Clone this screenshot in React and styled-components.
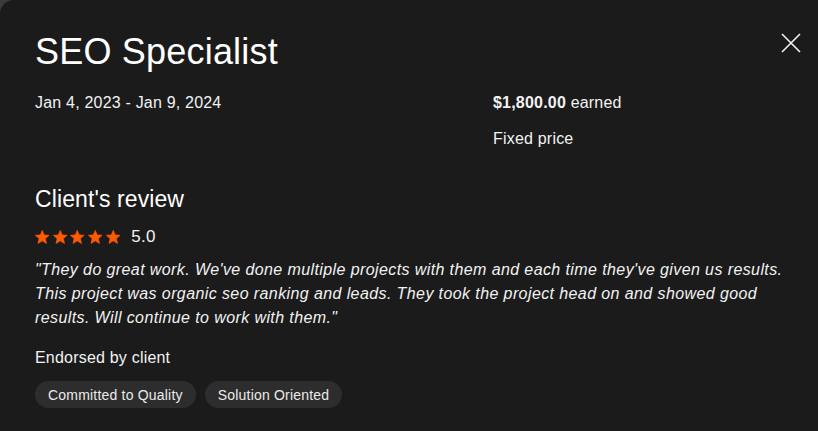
import styled, { createGlobalStyle } from 'styled-components';

const Global = createGlobalStyle`
  html, body {
    margin: 0;
    padding: 0;
    background: #3a3a3a;
  }
  body {
    font-family: "Liberation Sans", Arial, sans-serif;
    color: #f2f2f2;
  }
`;

const Modal = styled.div`
  position: relative;
  box-sizing: border-box;
  width: 818px;
  height: 431px;
  background: #1b1b1b;
  border-top-left-radius: 14px;
  padding: 30px 35px 0 35px;
`;

const Close = styled.button`
  position: absolute;
  top: 33px;
  right: 17px;
  width: 20px;
  height: 20px;
  padding: 0;
  border: 0;
  background: none;
  cursor: pointer;
  svg {
    display: block;
  }
`;

const Title = styled.h1`
  margin: 0;
  font-size: 36px;
  font-weight: 400;
  line-height: 44px;
  letter-spacing: 0.2px;
  color: #fff;
`;

const Meta = styled.div`
  display: grid;
  grid-template-columns: 458px 1fr;
  margin-top: 19px;
  font-size: 16px;
  line-height: 20px;
  letter-spacing: 0.2px;
  ._right {
    display: flex;
    flex-direction: column;
    gap: 16px;
  }
  b {
    font-weight: 700;
  }
`;

const SectionTitle = styled.h2`
  margin: 36px 0 0;
  font-size: 23px;
  font-weight: 400;
  line-height: 28px;
  letter-spacing: 0.1px;
  color: #fff;
`;

const Rating = styled.div`
  display: flex;
  align-items: center;
  height: 20px;
  margin-top: 14px;
  ._stars {
    display: flex;
    gap: 1.2px;
    margin-left: -1px;
    margin-right: 10px;
  }
  ._score {
    font-size: 17px;
    line-height: 20px;
    letter-spacing: 0.3px;
  }
`;

const Quote = styled.p`
  margin: 11px 0 0;
  font-size: 16px;
  font-style: italic;
  line-height: 24px;
  letter-spacing: 0.4px;
  color: #f2f2f2;
`;

const Label = styled.div`
  margin-top: 18px;
  font-size: 16px;
  line-height: 20px;
  letter-spacing: 0.2px;
`;

const Chips = styled.div`
  display: flex;
  gap: 9px;
  margin-top: 13px;
`;

const Chip = styled.span`
  display: inline-flex;
  align-items: center;
  height: 27px;
  padding: 0 13px;
  border-radius: 14px;
  background: #2d2d2d;
  font-size: 14px;
  letter-spacing: 0.2px;
  color: #eaeaea;
`;

// plump five-point star, slightly rounded points
const Star = () => (
  <svg width="16.5" height="16.5" viewBox="0 0 24 24">
    <path
      fill="#ff5a00"
      stroke="#ff5a00"
      strokeWidth="1"
      strokeLinejoin="round"
      d="M12 17.27L18.18 21l-1.64-7.03L22 9.24l-7.19-.61L12 2 9.19 8.63 2 9.24l5.46 4.73L5.82 21z"
    />
  </svg>
);

const tags = ['Committed to Quality', 'Solution Oriented'];

const App = () => (
  <>
    <Global />
    <Modal>
      <Close aria-label="Close">
        <svg width="20" height="20" viewBox="0 0 20 20">
          <path d="M1 1L19 19M19 1L1 19" stroke="#f2f2f2" strokeWidth="1.6" />
        </svg>
      </Close>
      <Title>SEO Specialist</Title>
      <Meta>
        <div>Jan 4, 2023 - Jan 9, 2024</div>
        <div className="_right">
          <div>
            <b>$1,800.00</b> earned
          </div>
          <div>Fixed price</div>
        </div>
      </Meta>
      <SectionTitle>Client's review</SectionTitle>
      <Rating>
        <div className="_stars">
          {[0, 1, 2, 3, 4].map(i => (
            <Star key={i} />
          ))}
        </div>
        <span className="_score">5.0</span>
      </Rating>
      <Quote>
        "They do great work. We've done multiple projects with them and each time they've given us results.
        <br />
        This project was organic seo ranking and leads. They took the project head on and showed good
        <br />
        results. Will continue to work with them."
      </Quote>
      <Label>Endorsed by client</Label>
      <Chips>
        {tags.map(t => (
          <Chip key={t}>{t}</Chip>
        ))}
      </Chips>
    </Modal>
  </>
);

export default App;
